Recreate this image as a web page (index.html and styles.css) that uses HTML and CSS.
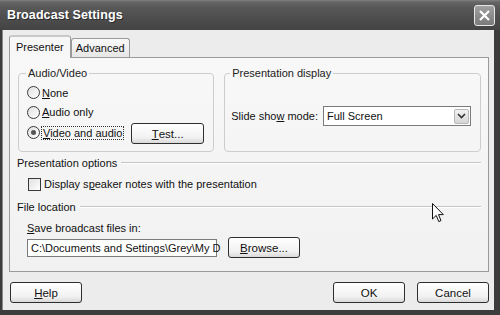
FILE: index.html
```html
<!DOCTYPE html>
<html lang="en">
<head>
    <meta charset="UTF-8">
    <title>Broadcast Settings</title>
    <link rel="stylesheet" href="styles.css">
</head>
<body>
    <div class="window">
        <div class="titlebar">
            <span class="title">Broadcast Settings</span>
            <span class="close-btn">
                <svg width="13" height="13" viewBox="0 0 13 13"><path d="M2 2 L11 11 M11 2 L2 11" stroke="#fff" stroke-width="2.2"/></svg>
            </span>
        </div>
        <div class="client">
            <div class="tabs">
                <div class="tab active">Presenter</div>
                <div class="tab">Advanced</div>
            </div>
            <div class="panel">
                <div class="groups">
                    <fieldset class="group av-group">
                        <legend>Audio/Video</legend>
                        <div class="radio-row"><span class="radio"></span><span><u>N</u>one</span></div>
                        <div class="radio-row"><span class="radio"></span><span><u>A</u>udio only</span></div>
                        <div class="radio-row last">
                            <span class="radio checked"></span><span class="focus"><u>V</u>ideo and audio</span>
                            <span class="btn test-btn"><u>T</u>est...</span>
                        </div>
                    </fieldset>
                    <fieldset class="group display-group">
                        <legend>Presentation display</legend>
                        <div class="mode-row">
                            <span>Slide sho<u>w</u> mode:</span>
                            <span class="select">
                                <span>Full Screen</span>
                                <span class="select-arrow">
                                    <svg width="9" height="6" viewBox="0 0 9 6"><path d="M1 1 L4.5 4.5 L8 1" fill="none" stroke="#333" stroke-width="1.6"/></svg>
                                </span>
                            </span>
                        </div>
                    </fieldset>
                </div>
                <div class="section-head"><span>Presentation options</span><span class="rule"></span></div>
                <div class="check-row"><span class="checkbox"></span><span>Display s<u>p</u>eaker notes with the presentation</span></div>
                <div class="section-head"><span>File location</span><span class="rule"></span></div>
                <div class="save-label"><u>S</u>ave broadcast files in:</div>
                <div class="path-row">
                    <span class="input">C:\Documents and Settings\Grey\My D</span>
                    <span class="btn browse-btn"><u>B</u>rowse...</span>
                </div>
            </div>
            <div class="footer">
                <span class="btn"><u>H</u>elp</span>
                <div class="footer-right">
                    <span class="btn">OK</span>
                    <span class="btn">Cancel</span>
                </div>
            </div>
        </div>
        <svg class="cursor" width="13" height="21" viewBox="0 0 13 21"><path d="M0.5 0.5 L0.5 16 L4.2 12.4 L6.8 18.6 L9 17.6 L6.5 11.6 L11.3 11.6 Z" fill="#fff" stroke="#111" stroke-width="1"/></svg>
    </div>
</body>
</html>
```

FILE: styles.css
```css
body {
    margin: 0;
    font-family: 'Liberation Sans', Arial, sans-serif;
    font-size: 11px;
    color: #111;
}
.window {
    position: relative;
    width: 500px;
    height: 315px;
    background-color: #3c3c3c;
    display: flex;
    flex-direction: column;
    box-sizing: border-box;
    padding: 0 6px 5px 3px;
}
.titlebar {
    height: 30px;
    margin: 0 -6px 0 -3px;
    padding: 0 5px 0 7px;
    background: linear-gradient(#808080 0, #666 2px, #575757 8px, #4a4a4a 22px, #444 30px);
    display: flex;
    align-items: center;
    justify-content: space-between;
}
.title {
    color: #fff;
    font-weight: bold;
    font-size: 12.5px;
    letter-spacing: 0.1px;
    text-shadow: 1px 1px 0 #2a2a2a;
}
.close-btn {
    width: 19px;
    height: 19px;
    border: 1px solid #e8e8e8;
    border-radius: 3px;
    background: linear-gradient(#a0a0a0, #7a7a7a);
    display: flex;
    align-items: center;
    justify-content: center;
}
.client {
    flex: 1;
    background-color: #ececec;
    padding: 5px 5px 0 6px;
    display: flex;
    flex-direction: column;
    border-left: 1px solid #8a8a8a;
    margin-left: -1px;
}
.tabs {
    display: flex;
    align-items: flex-end;
    height: 22px;
    position: relative;
    z-index: 1;
}
.tab {
    height: 18px;
    padding: 0 4px;
    line-height: 18px;
    border: 1px solid #9a9a9a;
    border-bottom: none;
    border-radius: 3px 3px 0 0;
    background: linear-gradient(#fafafa, #e6e6e6);
}
.tab.active {
    line-height: 20px;
    padding: 0 6px;
    background: #f7f7f7;
    border-top: 2px solid #c8c8c8;
    box-sizing: border-box;
    margin-bottom: -1px;
    height: 23px;
}
.panel {
    width: 480px;
    height: 215px;
    box-sizing: border-box;
    border: 1px solid #9a9a9a;
    background: linear-gradient(#f8f8f8, #f1f1f1);
    padding: 8px 7px 0 8px;
}
.groups {
    display: flex;
    gap: 10px;
}
.group {
    margin: 0;
    height: 86px;
    box-sizing: border-box;
    border: 1px solid #cdcdcd;
    border-radius: 4px;
    padding: 3px 9px 0 8px;
}
.group legend {
    padding: 0 2px;
    margin-left: -1px;
    line-height: 14px;
    color: #222;
}
.av-group {
    width: 197px;
}
.display-group {
    width: 258px;
    padding-left: 6px;
}
.radio-row {
    display: flex;
    align-items: center;
    height: 19.5px;
    gap: 2px;
}
.radio {
    width: 11px;
    height: 11px;
    border: 1px solid #3a3a3a;
    border-radius: 50%;
    background: linear-gradient(135deg, #e0e0e0, #fff);
    position: relative;
}
.radio.checked::after {
    content: "";
    position: absolute;
    left: 3px;
    top: 3px;
    width: 5px;
    height: 5px;
    border-radius: 50%;
    background: #555;
}
.focus {
    outline: 1px dotted #333;
    padding: 0 1px;
}
.radio-row.last {
    margin-top: 1px;
}
.test-btn {
    margin-left: auto;
    margin-top: 2px;
    width: 72px;
}
.btn {
    display: inline-flex;
    align-items: center;
    justify-content: center;
    box-sizing: border-box;
    height: 21px;
    width: 73px;
    border: 1px solid #2e2e2e;
    border-radius: 3px;
    background: linear-gradient(#fff, #f2f2f2 70%, #d9d9d9);
    font-size: 11.5px;
}
.mode-row {
    display: flex;
    align-items: center;
    justify-content: space-between;
    margin-top: 23px;
}
.select {
    width: 148px;
    height: 20px;
    box-sizing: border-box;
    border: 1px solid #7b7b7b;
    background: #fff;
    display: flex;
    align-items: center;
    justify-content: space-between;
    padding: 0 1px 0 3px;
}
.select-arrow {
    width: 15px;
    height: 15px;
    box-sizing: border-box;
    border: 1px solid #b8b8b8;
    border-radius: 2px;
    background: linear-gradient(#f2f2f2, #d6d6d6);
    display: flex;
    align-items: center;
    justify-content: center;
}
.section-head {
    display: flex;
    align-items: center;
    gap: 4px;
    height: 14px;
    margin-top: 4px;
    margin-left: -1px;
}
.rule {
    flex: 1;
    height: 0;
    border-top: 1px solid #c4c4c4;
    border-bottom: 1px solid #fff;
}
.check-row {
    display: flex;
    align-items: center;
    gap: 3px;
    height: 14px;
    margin: 7px 0 0 10px;
}
.checkbox {
    width: 11px;
    height: 11px;
    border: 1px solid #3a3a3a;
    background: linear-gradient(135deg, #e0e0e0, #fff);
}
.check-row + .section-head {
    margin-top: 9px;
}
.save-label {
    margin: 7px 0 0 9px;
    height: 14px;
    line-height: 14px;
}
.path-row {
    display: flex;
    align-items: center;
    gap: 11px;
    margin: 2px 0 0 9px;
    height: 21px;
}
.input {
    width: 190px;
    height: 18px;
    box-sizing: border-box;
    border: 1px solid #7b7b7b;
    background: #fff;
    padding: 0 3px;
    line-height: 16px;
    white-space: nowrap;
}
.browse-btn {
    width: 72px;
}
.footer {
    display: flex;
    justify-content: space-between;
    align-items: center;
    margin-top: 10px;
    padding: 0 0 0 1px;
}
.footer-right {
    display: flex;
    gap: 12px;
}
.footer .btn {
    width: 72px;
    height: 21px;
}
.cursor {
    position: absolute;
    left: 432px;
    top: 203px;
}
```
